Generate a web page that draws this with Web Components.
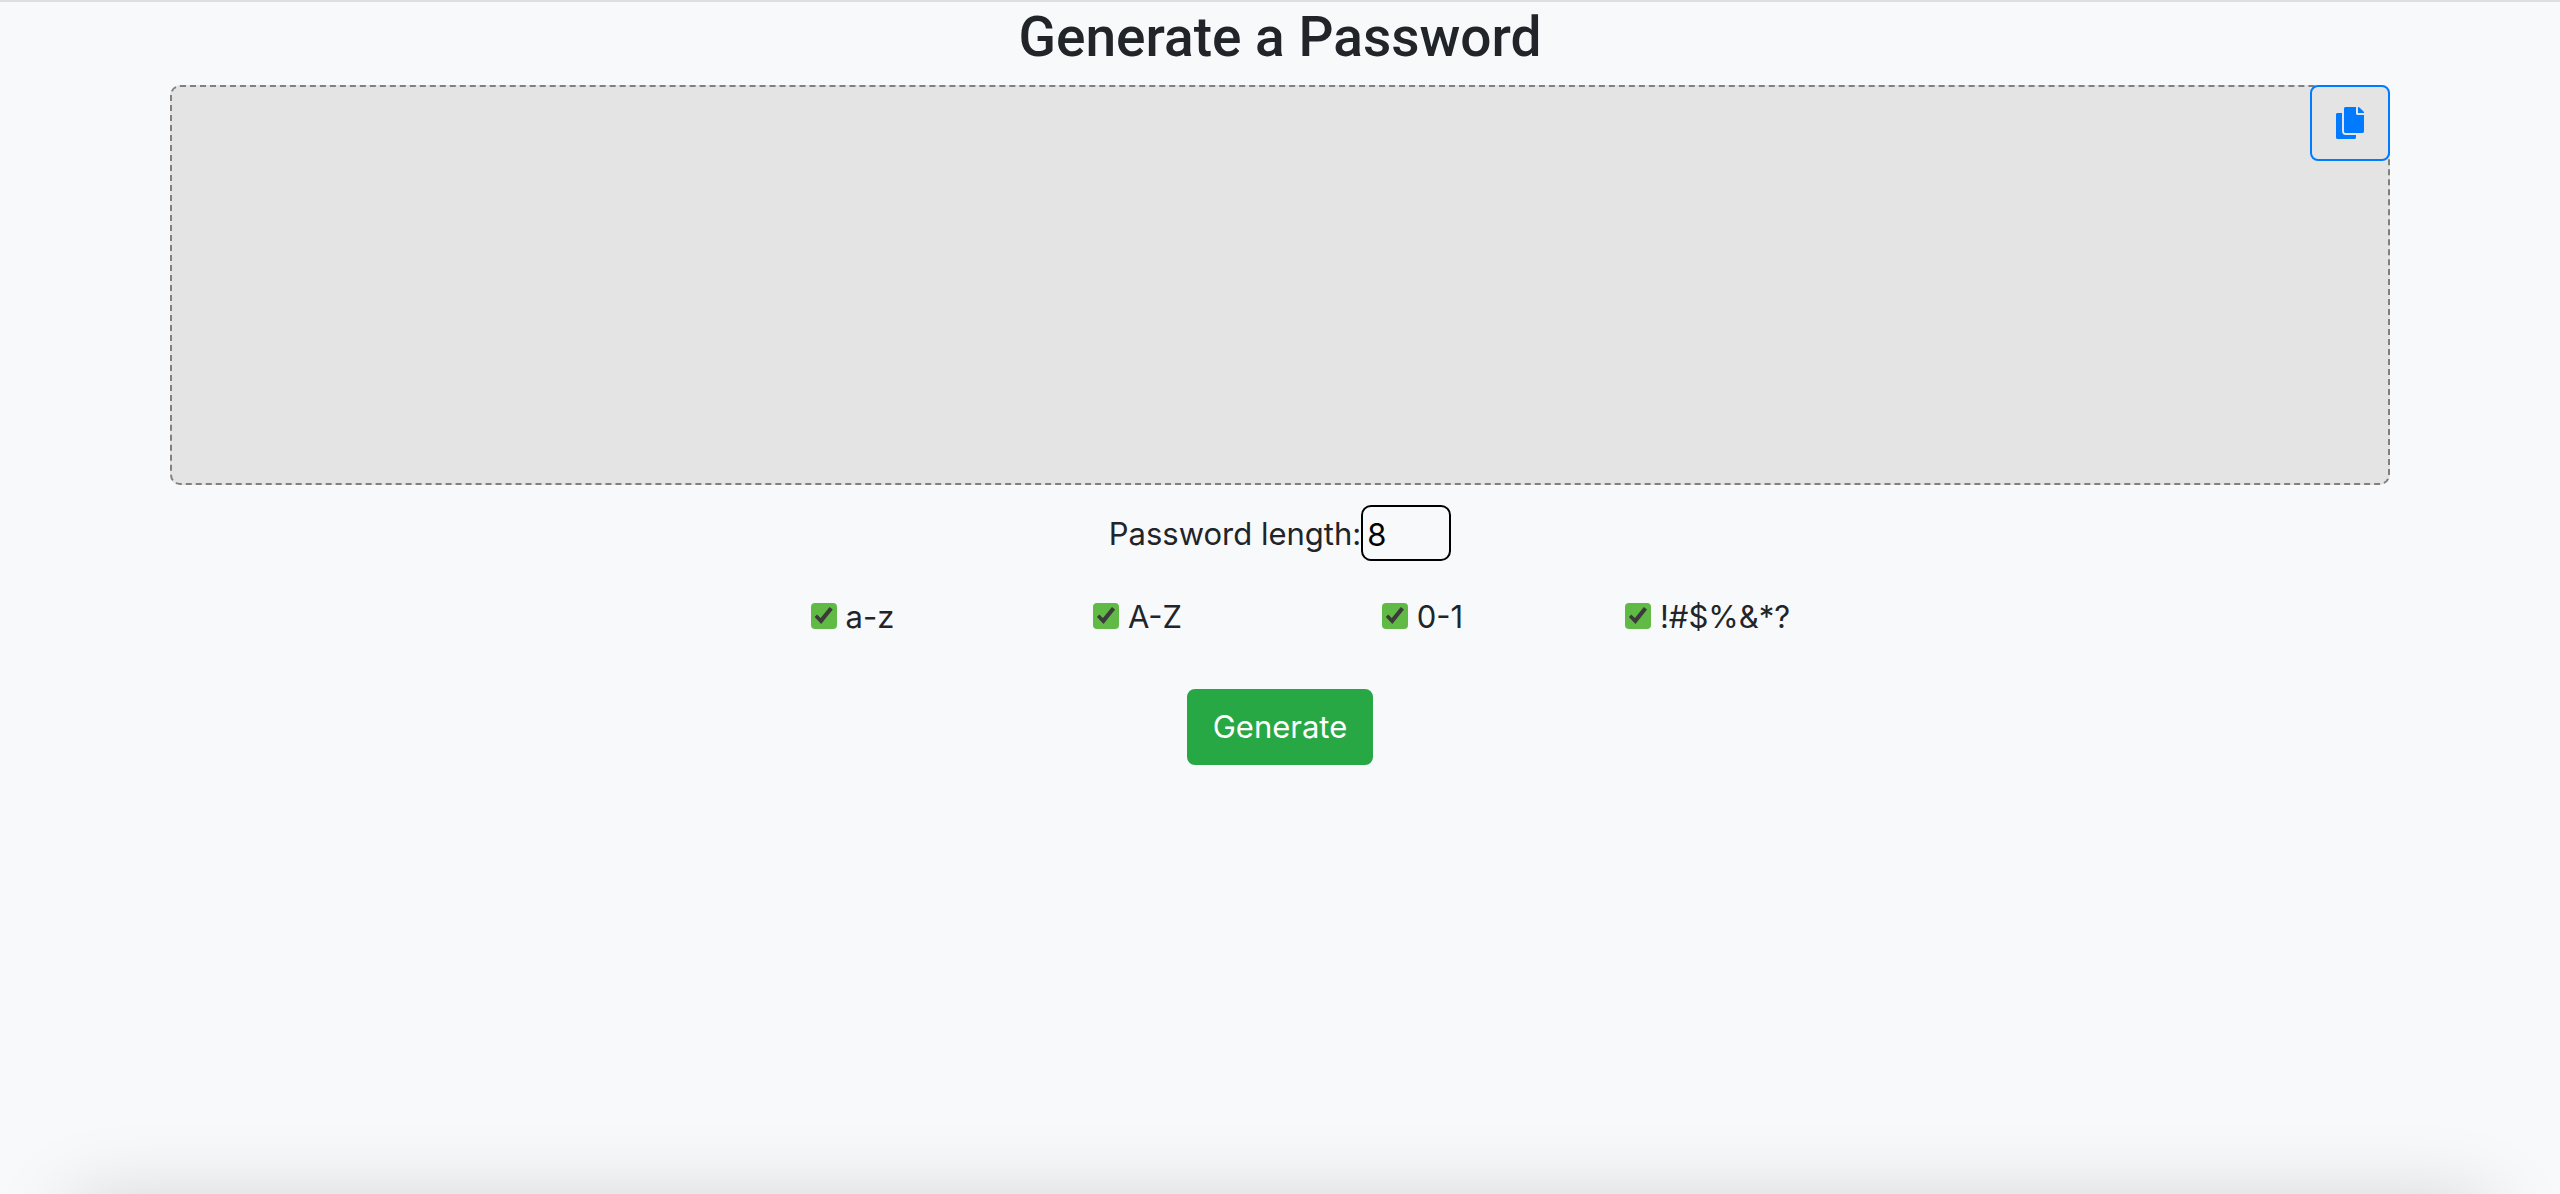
<!DOCTYPE html>
<html lang="en">
<head>
<meta charset="utf-8">
<title>Generate a Password</title>
<style>
body { margin: 0; background: #f8f9fb; color: #212529; font-family: Inter, "Liberation Sans", sans-serif; font-size: 31px; line-height: 48px; }
</style>
</head>
<body>
<password-generator></password-generator>

<template id="generator-template">
<style>
:host { display: flex; flex-direction: column; min-height: 100vh; box-sizing: border-box; border-top: 2px solid #dddedf; }
main { flex: 1; width: 100%; max-width: 2280px; box-sizing: border-box; margin: 0 auto; padding: 0 30px; display: flex; flex-direction: column; align-items: center; }
h1 { margin: 0 0 13px; font-family: Roboto, Inter, sans-serif; font-size: 55px; line-height: 70px; font-weight: 500; }
password-output { align-self: stretch; }
.length { display: flex; align-items: center; margin-top: 20px; }
.length label { padding-top: 2px; }
.length input { box-sizing: border-box; width: 90px; height: 56px; margin: 0; padding: 4px 4px 2px; border: 2px solid #000; border-radius: 10px; background: #f8f9fb; color: #000; font: inherit; }
fieldset { display: grid; grid-template-columns: repeat(4, 1fr); width: 1140px; max-width: 100%; margin: 30px 0 0; padding: 0; border: 0; justify-items: center; }
.generate { margin-top: 48px; padding: 12px 24px; border: 2px solid #28a745; border-radius: 8px; background: #28a745; color: #fff; font: inherit; }
</style>
<main>
  <h1>Generate a Password</h1>
  <password-output></password-output>
  <div class="length"><label for="length">Password length:</label><input id="length" type="number" value="8" min="1"></div>
  <fieldset aria-label="Characters">
    <check-option>a-z</check-option>
    <check-option>A-Z</check-option>
    <check-option>0-1</check-option>
    <check-option>!#$%&amp;*?</check-option>
  </fieldset>
  <button class="generate" type="button">Generate</button>
</main>
<bottom-shade></bottom-shade>
</template>

<template id="output-template">
<style>
:host { display: flex; justify-content: flex-end; align-items: flex-start; box-sizing: border-box; height: 400px; border: 2px dashed #808080; border-radius: 10px; background: #e4e4e4; }
button { display: flex; justify-content: center; align-items: center; box-sizing: border-box; width: 80px; height: 76px; margin: -2px; padding: 0; border: 2px solid #007bff; border-radius: 8px; background: #e4e4e4; color: #007bff; }
svg { display: block; width: 28px; height: 32px; }
</style>
<button type="button" aria-label="Copy password">
  <svg viewBox="0 0 448 512" fill="currentColor" aria-hidden="true"><path d="M320 448v40c0 13.255-10.745 24-24 24H24c-13.255 0-24-10.745-24-24V120c0-13.255 10.745-24 24-24h72v296c0 30.879 25.121 56 56 56h168zm0-344V0H152c-13.255 0-24 10.745-24 24v368c0 13.255 10.745 24 24 24h272c13.255 0 24-10.745 24-24V128H344c-13.2 0-24-10.8-24-24zm120.971-31.029L375.029 7.029A24 24 0 0 0 358.059 0H352v96h96v-6.059a24 24 0 0 0-7.029-16.97z"/></svg>
</button>
</template>

<template id="check-template">
<style>
:host { display: block; }
label { display: flex; align-items: center; gap: 9px; }
input { appearance: none; width: 26px; height: 26px; margin: 0; border-radius: 4px; background: #62ba46; }
input:checked::before { content: ""; display: block; width: 26px; height: 26px; background: #3b3b3b; clip-path: polygon(4px 14px, 6.4px 11.4px, 10px 15px, 19px 4px, 22.2px 6.6px, 10.6px 21px); }
span { padding-top: 2px; }
</style>
<label><input type="checkbox" checked><span><slot></slot></span></label>
</template>

<template id="shade-template">
<style>
:host { display: block; height: 100px; overflow: hidden; }
div { height: 200px; margin: 108px 72px 0; box-shadow: 0 0 80px rgba(0, 0, 0, .17); }
</style>
<div></div>
</template>

<script>
class TemplateElement extends HTMLElement {
  constructor() {
    super();
    const template = document.getElementById(this.constructor.templateId);
    this.attachShadow({ mode: "open" }).append(template.content.cloneNode(true));
  }
}
class PasswordOutput extends TemplateElement { static templateId = "output-template"; }
class CheckOption extends TemplateElement { static templateId = "check-template"; }
class BottomShade extends TemplateElement { static templateId = "shade-template"; }
class PasswordGenerator extends TemplateElement { static templateId = "generator-template"; }
customElements.define("password-output", PasswordOutput);
customElements.define("check-option", CheckOption);
customElements.define("bottom-shade", BottomShade);
customElements.define("password-generator", PasswordGenerator);
</script>
</body>
</html>
